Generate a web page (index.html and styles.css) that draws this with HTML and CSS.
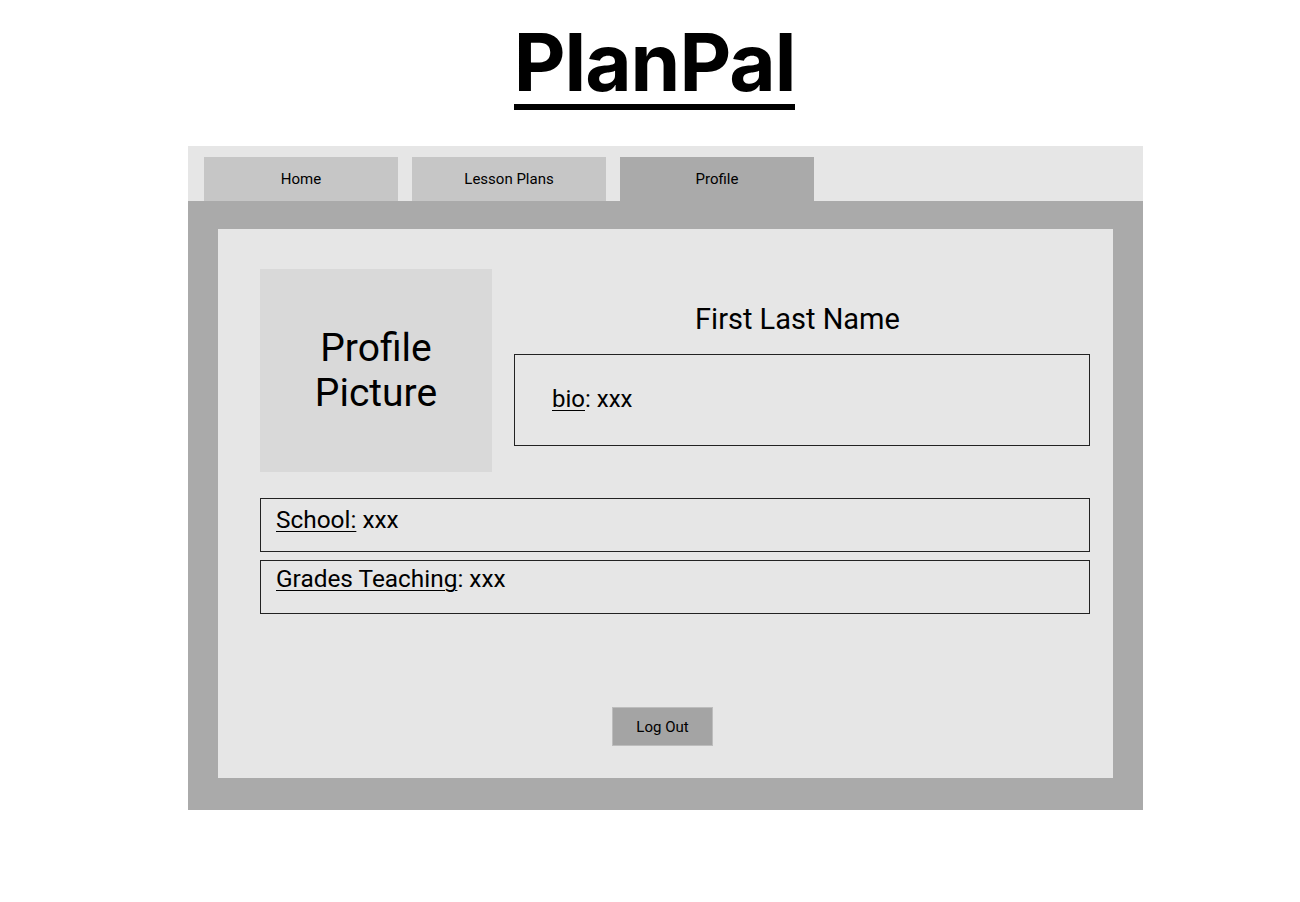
FILE: index.html
```html
<!DOCTYPE html>
<html>
<head>
<meta charset="utf-8">
<link rel="stylesheet" href="styles.css">
</head>
<body>
<header class="header">
  <h1 class="title">PlanPal</h1>
</header>
<main class="app">
  <nav class="tabs">
    <div class="tab">Home</div>
    <div class="tab">Lesson Plans</div>
    <div class="tab active">Profile</div>
  </nav>
  <section class="panel">
    <div class="card">
      <div class="top">
        <div class="picture">Profile<br>Picture</div>
        <div class="info">
          <div class="name">First Last Name</div>
          <div class="bio"><span class="u">bio</span>: xxx</div>
        </div>
      </div>
      <div class="field"><span class="u">School:</span> xxx</div>
      <div class="field grades"><span class="u">Grades Teaching</span>: xxx</div>
      <div class="actions">
        <button class="logout">Log Out</button>
      </div>
    </div>
  </section>
</main>
</body>
</html>
```

FILE: styles.css
```css
* { box-sizing: border-box; }
body {
  margin: 0;
  background: #ffffff;
  font-family: Roboto, "Liberation Sans", sans-serif;
  color: #000;
}
.header {
  display: flex;
  justify-content: center;
  padding-top: 14px;
  padding-left: 9px;
  height: 146px;
}
.title {
  margin: 0;
  font-family: Inter, "Liberation Sans", sans-serif;
  font-weight: 700;
  font-size: 80px;
  line-height: 96px;
  height: 96px;
  letter-spacing: -1px;
  border-bottom: 6px solid #000;
  align-self: flex-start;
}
.app {
  width: 955px;
  margin: 0 0 0 188px;
}
.tabs {
  display: flex;
  gap: 14px;
  background: #e6e6e6;
  padding: 11px 16px 0;
  height: 55px;
}
.tab {
  width: 194px;
  height: 44px;
  background: #c6c6c6;
  display: flex;
  align-items: center;
  justify-content: center;
  font-size: 15px;
  padding-bottom: 1px;
}
.tab.active { background: #aaaaaa; }
.panel {
  background: #aaaaaa;
  padding: 28px 30px 32px;
}
.card {
  background: #e6e6e6;
  height: 549px;
  padding: 40px 23px 0 42px;
  display: flex;
  flex-direction: column;
}
.top {
  display: flex;
  gap: 22px;
  margin-bottom: 26px;
}
.picture {
  width: 232px;
  height: 203px;
  background: #d9d9d9;
  display: flex;
  align-items: center;
  justify-content: center;
  text-align: center;
  font-size: 39px;
  line-height: 45px;
}
.info {
  flex: 1;
  display: flex;
  flex-direction: column;
}
.name {
  text-align: center;
  font-size: 29px;
  line-height: 36px;
  margin-top: 32px;
  margin-bottom: 17px;
  padding-right: 9px;
}
.bio {
  height: 92px;
  border: 1px solid #222;
  padding: 0 37px 2px;
  display: flex;
  align-items: center;
  font-size: 24px;
}
.u { text-decoration: underline; text-underline-offset: 3px; text-decoration-thickness: 1px; }
.field {
  height: 54px;
  border: 1px solid #222;
  padding: 6px 15px 0;
  font-size: 24.4px;
  line-height: 30px;
  margin-bottom: 8px;
}
.field.grades { padding-top: 3px; }
.actions {
  display: flex;
  justify-content: center;
  margin-top: 85px;
}
.logout {
  width: 101px;
  height: 39px;
  border: 1px solid #bdbdbd;
  background: #a4a4a4;
  font-family: Roboto, "Liberation Sans", sans-serif;
  font-size: 15px;
  color: #000;
  margin-left: -25px;
}
```
